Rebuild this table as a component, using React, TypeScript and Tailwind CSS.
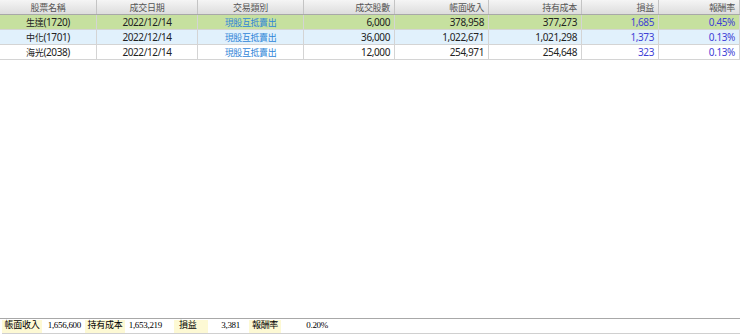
import React from "react";

interface Trade {
  name: string;
  code: string;
  date: string;
  kind: string;
  qty: string;
  income: string;
  cost: string;
  pnl: string;
  rate: string;
}

const cols = [
  { title: "股票名稱", w: "w-[97px]" },
  { title: "成交日期", w: "w-[101px]" },
  { title: "交易類別", w: "w-[106px]" },
  { title: "成交股數", w: "w-[91px]" },
  { title: "帳面收入", w: "w-[94px]" },
  { title: "持有成本", w: "w-[93px]" },
  { title: "損益", w: "w-[77px]" },
  { title: "報酬率", w: "w-[81px]" },
];

const trades: Trade[] = [
  { name: "生達", code: "(1720)", date: "2022/12/14", kind: "現股互抵賣出", qty: "6,000", income: "378,958", cost: "377,273", pnl: "1,685", rate: "0.45%" },
  { name: "中化", code: "(1701)", date: "2022/12/14", kind: "現股互抵賣出", qty: "36,000", income: "1,022,671", cost: "1,021,298", pnl: "1,373", rate: "0.13%" },
  { name: "海光", code: "(2038)", date: "2022/12/14", kind: "現股互抵賣出", qty: "12,000", income: "254,971", cost: "254,648", pnl: "323", rate: "0.13%" },
];

const rowBg = ["bg-[#c6e09f]", "bg-[#e1f1fc]", "bg-white"];

const cell = "border-r border-[#d4d4d4] flex items-center leading-none";
const num = `${cell} justify-end pr-[4px]`;

export default function App() {
  return (
    <div className="w-[740px] h-[336px] bg-white flex flex-col overflow-hidden text-[10px] tracking-[-0.4px] text-[#222] font-['Noto_Sans','Noto_Sans_CJK_TC',sans-serif]">
      {/* Grid */}
      <div className="flex-1 flex flex-col">
        <div className="flex h-[15px] bg-gradient-to-b from-[#f5f5f5] to-[#dddddd] border-b border-[#a8a8a8] text-[#555] text-[9px] tracking-[-0.3px]">
          {cols.map((c, i) => (
            <div
              key={c.title}
              className={`${c.w} border-r border-[#c4c4c4] flex items-center leading-none ${
                i < 3 ? "justify-center" : "justify-end pr-[4px]"
              }`}
            >
              {c.title}
            </div>
          ))}
        </div>
        {trades.map((t, i) => (
          <div key={t.code} className={`flex h-[15px] border-b border-[#d4d4d4] ${rowBg[i]}`}>
            <div className={`w-[97px] ${cell} justify-center`}>
              <span className="text-[9px] tracking-[-0.3px]">{t.name}</span>
              {t.code}
            </div>
            <div className={`w-[101px] ${cell} justify-center`}>{t.date}</div>
            <div className={`w-[106px] ${cell} justify-center text-[#2f86d8] text-[9px] tracking-[-0.4px]`}>{t.kind}</div>
            <div className={`w-[91px] ${num}`}>{t.qty}</div>
            <div className={`w-[94px] ${num}`}>{t.income}</div>
            <div className={`w-[93px] ${num}`}>{t.cost}</div>
            <div className={`w-[77px] ${num} text-[#3f3fd6]`}>{t.pnl}</div>
            <div className={`w-[81px] ${num} text-[#3f3fd6]`}>{t.rate}</div>
          </div>
        ))}
      </div>

      {/* Summary bar */}
      <div className="h-[15px] border-t border-[#a8a8a8] flex items-center text-[9px] tracking-[-0.3px] text-black font-['Liberation_Serif','Noto_Sans_CJK_TC',serif] mt-[1px]">
        <div className="w-[40px] ml-[2px] h-[13px] bg-[#fdf9d4] flex items-center justify-center">帳面收入</div>
        <div className="w-[41px] text-right pr-[2px]">1,656,600</div>
        <div className="w-[40px] ml-[2px] h-[13px] bg-[#fdf9d4] flex items-center justify-center">持有成本</div>
        <div className="w-[40px] text-right pr-[3px]">1,653,219</div>
        <div className="w-[34px] ml-[9px] h-[13px] bg-[#fdf9d4] flex items-center justify-start pl-[5px]">損益</div>
        <div className="w-[34px] text-right pr-[2px]">3,381</div>
        <div className="w-[32px] ml-[7px] h-[13px] bg-[#fdf9d4] flex items-center justify-center">報酬率</div>
        <div className="w-[50px] text-right pr-[3px]">0.20%</div>
      </div>
      <div className="h-[3px] border-t border-[#d0d0d0] ml-[2px]" />
    </div>
  );
}
